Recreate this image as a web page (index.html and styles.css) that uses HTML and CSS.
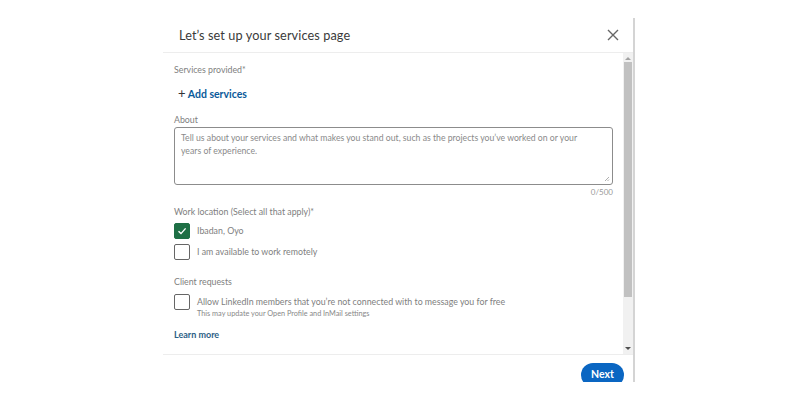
FILE: index.html
```html
<!DOCTYPE html>
<html lang="en">
<head>
    <meta charset="UTF-8">
    <meta name="viewport" content="width=device-width, initial-scale=1.0">
    <title>Services page</title>
    <link rel="stylesheet" href="styles.css">
</head>
<body>
    <div class="modal">
        <div class="modal-header">
            <h2 class="title">Let’s set up your services page</h2>
            <button class="close" aria-label="Dismiss">
                <svg width="12" height="12" viewBox="0 0 12 12"><path d="M1 1 L11 11 M11 1 L1 11" stroke="#666" stroke-width="1.4" fill="none"/></svg>
            </button>
        </div>

        <div class="modal-body">
            <div class="content">
                <div class="label first">Services provided*</div>
                <a class="add-link" href="#"><span class="plus">+</span> Add services</a>

                <div class="label about">About</div>
                <div class="textarea">
                    <span class="placeholder">Tell us about your services and what makes you stand out, such as the projects you’ve worked on or your years of experience.</span>
                    <svg class="grip" width="6" height="6" viewBox="0 0 6 6"><path d="M5 1 L1 5 M5 3.5 L3.5 5" stroke="#999" stroke-width="0.8"/></svg>
                </div>
                <div class="counter">0/500</div>

                <div class="label work">Work location (Select all that apply)*</div>
                <div class="check-row">
                    <span class="box checked">
                        <svg width="10" height="10" viewBox="0 0 10 10"><path d="M1.5 5.2 L4 7.6 L8.6 2.4" stroke="#fff" stroke-width="1.4" fill="none"/></svg>
                    </span>
                    <span class="check-text">Ibadan, Oyo</span>
                </div>
                <div class="check-row">
                    <span class="box"></span>
                    <span class="check-text">I am available to work remotely</span>
                </div>

                <div class="label client">Client requests</div>
                <div class="check-row top">
                    <span class="box"></span>
                    <div>
                        <div class="check-text">Allow LinkedIn members that you’re not connected with to message you for free</div>
                        <div class="hint">This may update your Open Profile and InMail settings</div>
                    </div>
                </div>

                <a class="learn" href="#">Learn more</a>
            </div>

            <div class="scrollbar">
                <span class="arrow up"></span>
                <span class="thumb"></span>
                <span class="arrow down"></span>
            </div>
        </div>

        <div class="modal-footer">
            <button class="next">Next</button>
        </div>
    </div>
</body>
</html>
```

FILE: styles.css
```css
*{
    margin: 0;
    padding: 0;
    box-sizing: border-box;
}
body{
    background: #fff;
    font-family: Lato, "Open Sans", sans-serif;
    color: #666;
}
.modal{
    margin: 18px 0 0 163px;
    width: 472px;
    height: 364px;
    border-right: 2px solid #d4d4d4;
    display: flex;
    flex-direction: column;
    overflow: hidden;
}
.modal-header{
    height: 35px;
    display: flex;
    align-items: center;
    justify-content: space-between;
    padding: 0 14px 0 16px;
    border-bottom: 1px solid #ededed;
    flex-shrink: 0;
}
.title{
    font-size: 12.7px;
    font-weight: 400;
    color: #3a3a3a;
    letter-spacing: 0.1px;
}
.close{
    border: none;
    background: none;
    width: 12px;
    height: 12px;
    display: flex;
}
.modal-body{
    height: 302px;
    display: flex;
    border-bottom: 1px solid #ededed;
    flex-shrink: 0;
}
.content{
    flex: 1;
    padding: 0 10px 0 11px;
}
.label{
    font-size: 8.8px;
    color: #808080;
    line-height: 12px;
}
.first{
    margin-top: 11px;
}
.add-link{
    display: inline-block;
    margin: 10px 0 0 4px;
    font-size: 10.5px;
    font-weight: 700;
    color: #0a5a9a;
    text-decoration: none;
    line-height: 14px;
}
.plus{
    font-size: 13px;
    font-weight: 400;
    color: #333;
}
.about{
    margin-top: 13px;
}
.textarea{
    position: relative;
    margin-top: 1px;
    height: 58px;
    border: 1px solid #8c8c8c;
    border-radius: 3px;
    padding: 3px 6px;
}
.placeholder{
    font-size: 8.7px;
    line-height: 13px;
    color: #8a8a8a;
    display: block;
    padding-right: 22px;
}
.grip{
    position: absolute;
    right: 2px;
    bottom: 2px;
}
.counter{
    text-align: right;
    font-size: 8px;
    color: #999;
    line-height: 12px;
    margin-top: 1px;
}
.work{
    margin-top: 8px;
}
.check-row{
    display: flex;
    align-items: center;
    gap: 7px;
    margin-top: 5px;
}
.check-row + .check-row{
    margin-top: 5px;
}
.check-row.top{
    align-items: flex-start;
    margin-top: 6px;
}
.box{
    width: 16px;
    height: 16px;
    border: 1px solid #666;
    border-radius: 2px;
    flex-shrink: 0;
    display: flex;
    align-items: center;
    justify-content: center;
}
.box.checked{
    background: #1e6f45;
    border-color: #1e6f45;
}
.check-text{
    font-size: 8.8px;
    color: #808080;
    line-height: 14px;
}
.top .check-text{
    line-height: 13px;
    margin-top: 1px;
}
.hint{
    font-size: 7.3px;
    color: #888;
    line-height: 11px;
}
.client{
    margin-top: 16px;
}
.learn{
    display: inline-block;
    margin-top: 10px;
    font-size: 9px;
    font-weight: 700;
    color: #2d5f86;
    text-decoration: none;
}
.scrollbar{
    width: 10px;
    background: #f1f1f1;
    display: flex;
    flex-direction: column;
    align-items: center;
    position: relative;
}
.thumb{
    width: 8px;
    height: 235px;
    background: #c1c1c1;
    margin-top: 2px;
}
.arrow{
    width: 0;
    height: 0;
    border-left: 3px solid transparent;
    border-right: 3px solid transparent;
    margin-top: 4px;
}
.arrow.up{
    border-bottom: 3px solid #a3a3a3;
}
.arrow.down{
    border-top: 3px solid #505050;
    margin-top: auto;
    margin-bottom: 4px;
}
.modal-footer{
    flex: 1;
    display: flex;
    justify-content: flex-end;
    align-items: flex-start;
    padding: 8px 9px 0 0;
}
.next{
    border: none;
    background: #0a66c2;
    color: #fff;
    font-family: Lato, "Open Sans", sans-serif;
    font-weight: 700;
    font-size: 10.5px;
    width: 43px;
    height: 24px;
    border-radius: 12px;
    padding-bottom: 2px;
}
```
